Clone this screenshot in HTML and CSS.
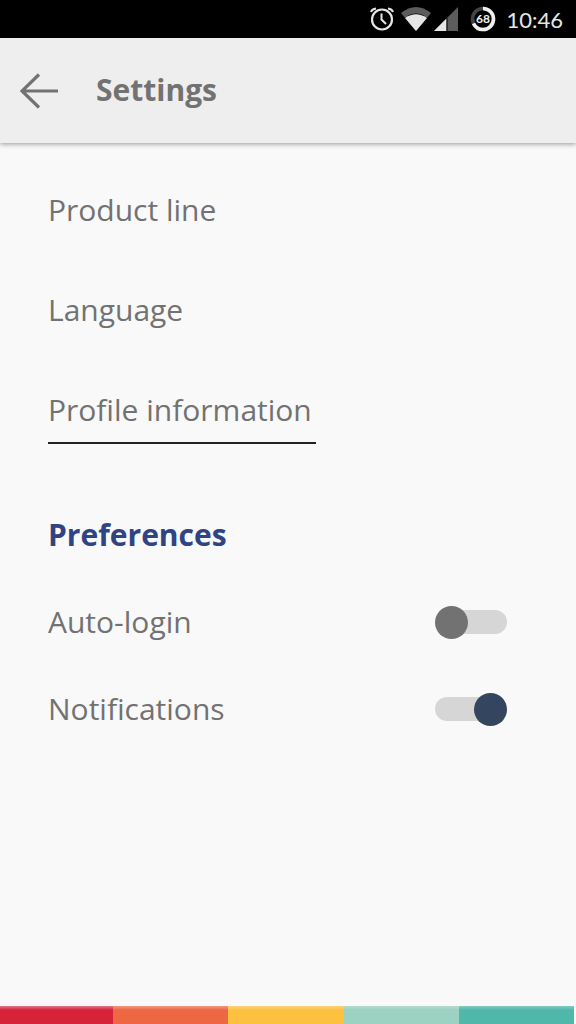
FILE: index.html
```html
<!DOCTYPE html>
<html lang="en">
<head>
<meta charset="utf-8">
<meta name="viewport" content="width=device-width, initial-scale=1">
<title>Settings</title>
<link rel="stylesheet" href="styles.css">
</head>
<body class="screen">
<div class="status">
  <svg class="status-alarm" viewBox="0 0 24 24" aria-hidden="true">
    <circle cx="12" cy="12.500" r="10" fill="none" stroke="#e6e6e6" stroke-width="2.200"/>
    <path d="M11.500 6.500v6l4.500 4.500" fill="none" stroke="#e6e6e6" stroke-width="2"/>
    <path d="M1 5Q2 2 6 1.500M23 5Q22 2 18 1.500" fill="none" stroke="#e6e6e6" stroke-width="2"/>
  </svg>
  <svg class="status-wifi" viewBox="0 0 30 24" aria-hidden="true">
    <path d="M0 6Q15-6 30 6L15 24Z" fill="#5c5c5c"/>
    <path d="M4 10.500Q15 2.500 26 10.500L15 24Z" fill="#000"/>
    <path d="M4 11Q15 3.500 26 11L15 24Z" fill="#e6e6e6"/>
  </svg>
  <svg class="status-signal" viewBox="0 0 24 24" aria-hidden="true">
    <path d="M24 0V24H0Z" fill="#5c5c5c"/>
    <path d="M12.500 11.500V24H0Z" fill="#e6e6e6"/>
    <path d="M13 11V24" stroke="#000" stroke-width="1"/>
  </svg>
  <svg class="status-battery" viewBox="0 0 26 26" role="img" aria-label="Battery 68%">
    <circle cx="13" cy="13" r="10.500" fill="none" stroke="#444" stroke-width="3.600"/>
    <circle cx="13" cy="13" r="10.500" fill="none" stroke="#f0f0f0" stroke-width="3.600" pathLength="100" stroke-dasharray="68 32" transform="rotate(-90 13 13)"/>
    <text class="battery-text" x="13" y="17" text-anchor="middle">68</text>
  </svg>
  <time class="clock">10:46</time>
</div>
<header class="appbar">
  <button class="back" type="button" aria-label="Back">
    <svg class="back-icon" viewBox="0 0 38 36" aria-hidden="true">
      <path d="M38 18H2M19 1.500L2 18L19 34.500" fill="none" stroke="#727272" stroke-width="3.200"/>
    </svg>
  </button>
  <h1 class="title">Settings</h1>
</header>
<main class="content">
  <nav class="links">
    <a class="link" href="#product-line">Product line</a>
    <a class="link" href="#language">Language</a>
    <a class="link link-active" href="#profile">Profile information</a>
  </nav>
  <section class="preferences">
    <h2 class="section-title">Preferences</h2>
    <div class="row">
      <label for="auto-login">Auto-login</label>
      <input class="switch" id="auto-login" type="checkbox" role="switch">
    </div>
    <div class="row">
      <label for="notifications">Notifications</label>
      <input class="switch" id="notifications" type="checkbox" role="switch" checked>
    </div>
  </section>
</main>
<footer class="stripes">
  <span class="stripe red"></span>
  <span class="stripe orange"></span>
  <span class="stripe yellow"></span>
  <span class="stripe mint"></span>
  <span class="stripe teal"></span>
</footer>
</body>
</html>
```
FILE: styles.css
```css
* { box-sizing: border-box; }

.screen {
  margin: 0;
  min-height: 100vh;
  display: flex;
  flex-direction: column;
  overflow-x: hidden;
  background: #f9f9f9;
  color: #727272;
  font: 30px/40px "Open Sans", "Noto Sans", sans-serif;
}

.status {
  display: flex;
  align-items: center;
  justify-content: flex-end;
  height: 38px;
  padding-right: 13px;
  background: #000;
  color: #e6e6e6;
}
.status-alarm { width: 24px; height: 24px; }
.status-wifi { width: 30px; height: 24px; margin-left: 7px; }
.status-signal { width: 24px; height: 24px; margin-left: 3px; }
.status-battery { width: 26px; height: 26px; margin: 0 10px 0 12px; }
.battery-text { font: 700 12px Lato, sans-serif; fill: #f0f0f0; }
.clock { padding-top: 2px; font: 22px/36px Lato, sans-serif; }

.appbar {
  display: flex;
  align-items: center;
  gap: 38px;
  height: 105px;
  padding: 0 20px;
  background: #eee;
  box-shadow: 0 1px 5px rgba(0, 0, 0, 0.4);
}
.back {
  display: flex;
  padding: 0;
  border: 0;
  background: none;
}
.back-icon { width: 38px; height: 36px; }
.title {
  margin: 0;
  padding-bottom: 2px;
  font-size: 30px;
  font-weight: 700;
}

.content {
  flex: 1;
  padding: 47px 69px 32px 48px;
}
.links {
  display: flex;
  flex-direction: column;
  align-items: flex-start;
  gap: 60px;
}
.link {
  color: inherit;
  text-decoration: none;
}
.link-active {
  padding: 0 4px 12px 0;
  border-bottom: 2px solid #222;
}

.preferences {
  display: flex;
  flex-direction: column;
  gap: 47px;
  margin-top: 71px;
}
.section-title {
  margin: 0;
  color: #304484;
  font-size: 30px;
  font-weight: 700;
}
.row {
  display: flex;
  align-items: center;
  justify-content: space-between;
}
.switch {
  appearance: none;
  position: relative;
  display: flex;
  align-items: center;
  width: 72px;
  height: 33px;
  margin: 0;
}
.switch::before {
  content: "";
  width: 100%;
  height: 24px;
  border-radius: 12px;
  background: #d6d6d6;
}
.switch::after {
  content: "";
  position: absolute;
  top: 0;
  left: 0;
  width: 33px;
  height: 33px;
  border-radius: 50%;
  background: #727272;
}
.switch:checked::after {
  right: 0;
  left: auto;
  background: #34465f;
}

.stripes {
  display: flex;
  height: 18px;
  margin-left: -2px;
  padding-right: 2px;
}
.stripe { flex: 1; }
.red { background: linear-gradient(#e2788a, #d72338 4px); }
.orange { background: linear-gradient(#f09a80, #ec6742 4px); }
.yellow { background: linear-gradient(#fbd27c, #fdc140 4px); }
.mint { background: linear-gradient(#b4dccd, #9bd2c1 4px); }
.teal { background: linear-gradient(#83cbbf, #4fb8aa 4px); }
```
